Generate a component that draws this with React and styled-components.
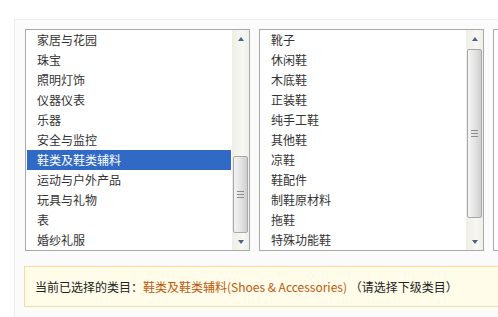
import { createGlobalStyle, styled } from "styled-components";

const GlobalStyle = createGlobalStyle`
  html, body {
    margin: 0;
    padding: 0;
    background: #fff;
  }
  body {
    font-family: "Noto Sans CJK SC", "Liberation Sans", sans-serif;
    font-size: 12px;
    color: #333;
    overflow: hidden;
  }
`;

const Page = styled.div`
  width: 498px;
  height: 317px;
  overflow: hidden;
`;

const Panel = styled.div`
  margin: 19px 0 0 14px;
  height: 298px;
  box-sizing: border-box;
  border-top: 1px solid #ededed;
  border-left: 1px solid #ededed;
  background: #fbfbfb;
  padding: 9px 0 0 10px;
`;

const ListRow = styled.div`
  display: flex;
  gap: 9px;
  width: 600px;
`;

const ListBox = styled.div`
  flex: none;
  display: flex;
  width: 225px;
  height: 222px;
  box-sizing: border-box;
  border: 1px solid #a9a9a9;
  background: #fff;
`;

const Items = styled.ul`
  flex: 1;
  margin: 0;
  padding: 0;
  list-style: none;
  overflow: hidden;
`;

const Item = styled.li`
  height: 20px;
  line-height: 20px;
  margin: 0 1px;
  padding-left: 10px;
  white-space: nowrap;
  color: ${(p) => (p.$selected ? "#fff" : "#333")};
  background: ${(p) => (p.$selected ? "#316ac5" : "transparent")};
`;

const ScrollBar = styled.div`
  flex: none;
  width: 17px;
  display: flex;
  flex-direction: column;
  background: linear-gradient(to right, #eeede5, #f7f7f3 60%, #f0f0ea);
`;

const Arrow = styled.div`
  height: 17px;
  display: flex;
  align-items: center;
  justify-content: center;
  &::after {
    content: "";
    width: 0;
    height: 0;
    border-left: 3px solid transparent;
    border-right: 3px solid transparent;
    ${(p) =>
      p.$down
        ? "border-top: 4px solid #4d6185;"
        : "border-bottom: 4px solid #4d6185;"}
  }
`;

const Track = styled.div`
  flex: 1;
  display: flex;
  flex-direction: column;
`;

const Thumb = styled.div`
  margin: ${(p) => p.$top}px 0 0 1px;
  width: 15px;
  height: ${(p) => p.$height}px;
  box-sizing: border-box;
  border: 1px solid #a8a8a8;
  border-radius: 2px;
  background: linear-gradient(to right, #f4f4f4, #e4e4e4 50%, #cfcfcf);
  display: flex;
  align-items: center;
  justify-content: center;
`;

const Grip = styled.div`
  width: 7px;
  height: 7px;
  background: repeating-linear-gradient(
    to bottom,
    #8a8a8a 0,
    #8a8a8a 1px,
    transparent 1px,
    transparent 3px
  );
`;

const Notice = styled.div`
  margin: 15px 0 0 -1px;
  width: 600px;
  height: 41px;
  box-sizing: border-box;
  border: 1px solid #f2dc9f;
  background: #fffde9;
  padding-left: 10px;
  display: flex;
  align-items: center;
  color: #222;
`;

const Picked = styled.span`
  color: #c0560c;
`;

const leftItems = [
  "家居与花园",
  "珠宝",
  "照明灯饰",
  "仪器仪表",
  "乐器",
  "安全与监控",
  "鞋类及鞋类辅料",
  "运动与户外产品",
  "玩具与礼物",
  "表",
  "婚纱礼服",
];

const rightItems = [
  "靴子",
  "休闲鞋",
  "木底鞋",
  "正装鞋",
  "纯手工鞋",
  "其他鞋",
  "凉鞋",
  "鞋配件",
  "制鞋原材料",
  "拖鞋",
  "特殊功能鞋",
];

const CategoryList = ({ items, selected, thumbTop, thumbHeight }) => (
  <ListBox>
    <Items>
      {items.map((name) => (
        <Item key={name} $selected={name === selected}>
          {name}
        </Item>
      ))}
    </Items>
    {thumbHeight > 0 && (
      <ScrollBar>
        <Arrow />
        <Track>
          <Thumb $top={thumbTop} $height={thumbHeight}>
            <Grip />
          </Thumb>
        </Track>
        <Arrow $down />
      </ScrollBar>
    )}
  </ListBox>
);

const App = () => {
  return (
    <Page>
      <GlobalStyle />
      <Panel>
        <ListRow>
          <CategoryList
            items={leftItems}
            selected="鞋类及鞋类辅料"
            thumbTop={109}
            thumbHeight={77}
          />
          <CategoryList items={rightItems} thumbTop={2} thumbHeight={169} />
          <CategoryList items={[]} thumbHeight={0} />
        </ListRow>
        <Notice>
          当前已选择的类目：
          <Picked>鞋类及鞋类辅料(Shoes &amp; Accessories)</Picked>
          &nbsp;（请选择下级类目）
        </Notice>
      </Panel>
    </Page>
  );
};

export default App;
